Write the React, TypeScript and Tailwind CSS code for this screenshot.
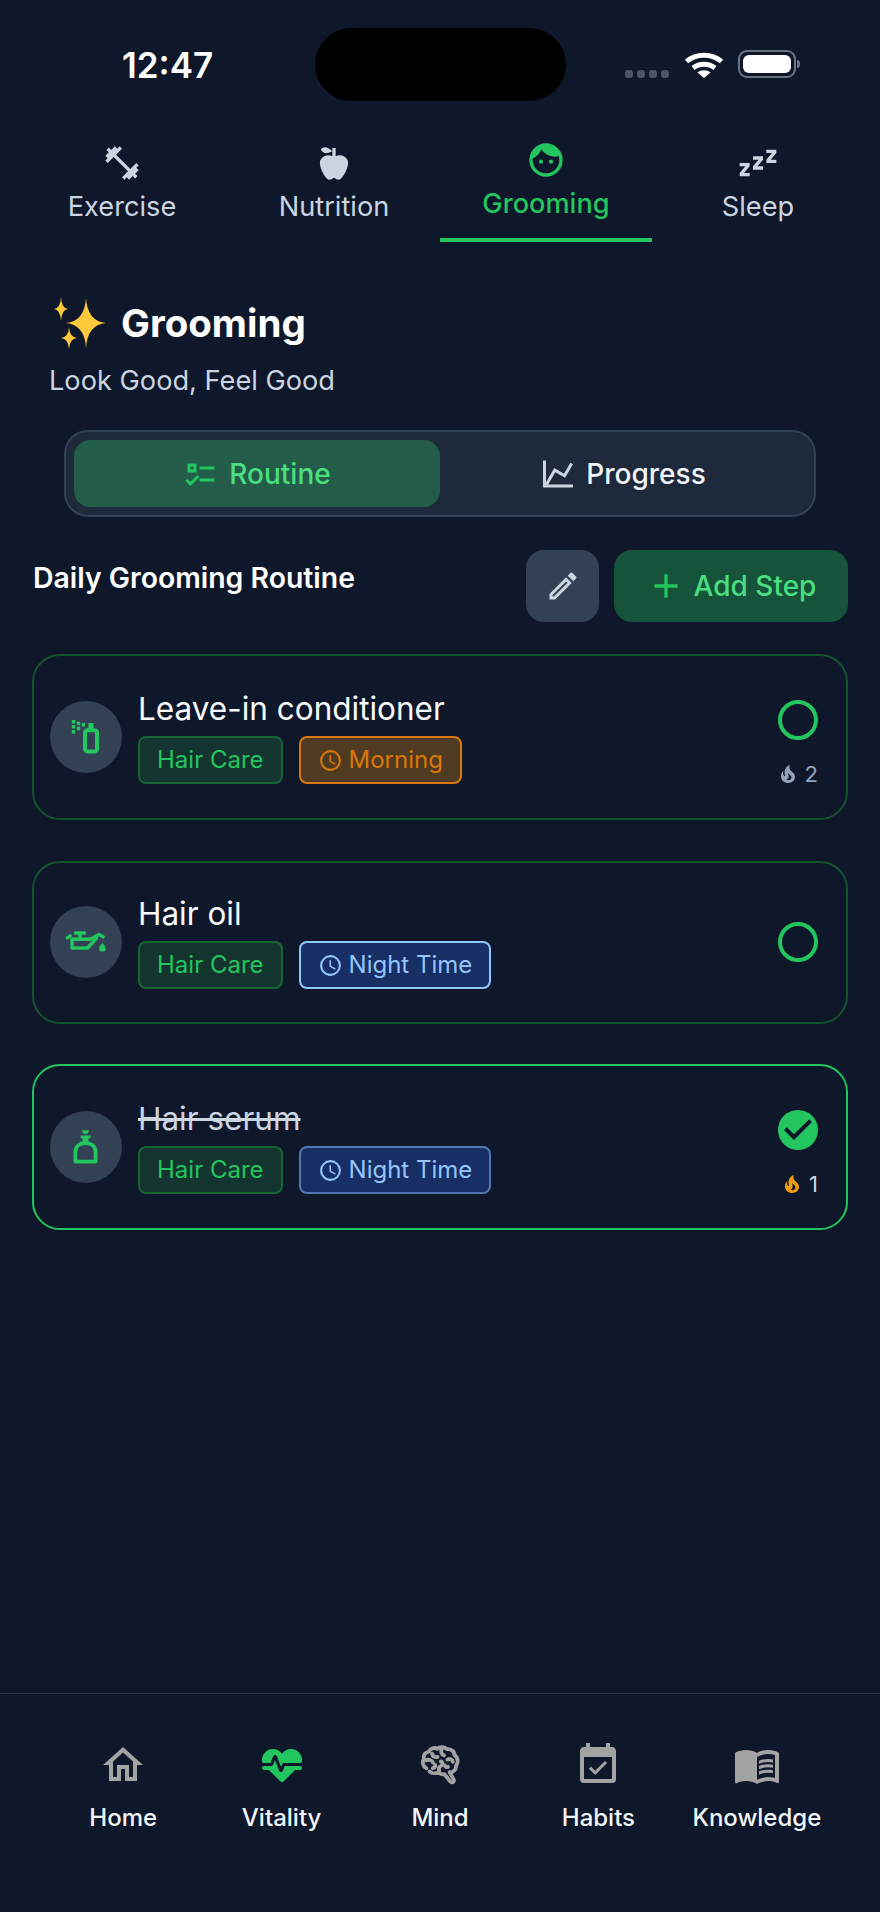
import type { ReactNode } from "react";

const mdi = {
  dumbbell:
    "M20.57,14.86L22,13.43L20.57,12L17,15.57L8.43,7L12,3.43L10.57,2L9.14,3.43L7.71,2L5.57,4.14L4.14,2.71L2.71,4.14L4.14,5.57L2,7.71L3.43,9.14L2,10.57L3.43,12L7,8.43L15.57,17L12,20.57L13.43,22L14.86,20.57L16.29,22L18.43,19.86L19.86,21.29L21.29,19.86L19.86,18.43L22,16.29L20.57,14.86Z",
  apple:
    "M20,10C22,13 17,22 15,22C13,22 13,21 12,21C11,21 11,22 9,22C7,22 2,13 4,10C6,7 9,7 11,8V5C5.38,8.07 4.11,3.78 4.11,3.78C4.11,3.78 6.77,0.19 11,5V3H13V8C15,7 18,7 20,10Z",
  face:
    "M9,11.75A1.25,1.25 0 0,0 7.75,13A1.25,1.25 0 0,0 9,14.25A1.25,1.25 0 0,0 10.25,13A1.25,1.25 0 0,0 9,11.75M15,11.75A1.25,1.25 0 0,0 13.75,13A1.25,1.25 0 0,0 15,14.25A1.25,1.25 0 0,0 16.25,13A1.25,1.25 0 0,0 15,11.75M12,2A10,10 0 0,0 2,12A10,10 0 0,0 12,22A10,10 0 0,0 22,12A10,10 0 0,0 12,2M12,20C7.59,20 4,16.41 4,12C4,11.71 4,11.42 4.05,11.14C6.41,10.09 8.28,8.16 9.26,5.77C11.07,8.33 14.05,10 17.42,10C18.2,10 18.95,9.91 19.67,9.74C19.88,10.45 20,11.21 20,12C20,16.41 16.41,20 12,20Z",
  sleep:
    "M23,12H17V10L20.39,6H17V4H23V6L19.62,10H23V12M15,16H9V14L12.39,10H9V8H15V10L11.62,14H15V16M7,20H1V18L4.39,14H1V12H7V14L3.62,18H7V20Z",
  listChecks:
    "M3,5H9V11H3V5M5,7V9H7V7H5M11,7H21V9H11V7M11,15H21V17H11V15M5,20L1.5,16.5L2.91,15.09L5,17.17L9.59,12.59L11,14L5,20Z",
  chartLine:
    "M16,11.78L20.24,4.45L21.97,5.45L16.74,14.5L10.23,10.75L5.46,19H22V21H2V3H4V17.54L9.5,8L16,11.78Z",
  pencil:
    "M14.06,9L15,9.94L5.92,19H5V18.08L14.06,9M17.66,3C17.41,3 17.15,3.1 16.96,3.29L15.13,5.12L18.88,8.87L20.71,7.04C21.1,6.65 21.1,6 20.71,5.63L18.37,3.29C18.17,3.09 17.92,3 17.66,3M14.06,6.19L3,17.25V21H6.75L17.81,9.94L14.06,6.19Z",
  plus: "M19,13H13V19H11V13H5V11H11V5H13V11H19V13Z",
  clock:
    "M12,20A8,8 0 0,0 20,12A8,8 0 0,0 12,4A8,8 0 0,0 4,12A8,8 0 0,0 12,20M12,2A10,10 0 0,1 22,12A10,10 0 0,1 12,22C6.47,22 2,17.5 2,12A10,10 0 0,1 12,2M12.5,7V12.25L17,14.92L16.25,16.15L11,13V7H12.5Z",
  fire:
    "M17.66 11.2C17.43 10.9 17.15 10.64 16.89 10.38C16.22 9.78 15.46 9.35 14.82 8.72C13.33 7.26 13 4.85 13.95 3C13 3.23 12.17 3.75 11.46 4.32C8.87 6.4 7.85 10.07 9.07 13.22C9.11 13.32 9.15 13.42 9.15 13.55C9.15 13.77 9 13.97 8.8 14.05C8.57 14.15 8.33 14.09 8.14 13.93C8.08 13.88 8.04 13.83 8 13.76C6.87 12.33 6.69 10.28 7.45 8.64C5.78 10 4.87 12.3 5 14.47C5.06 14.97 5.12 15.47 5.29 15.97C5.43 16.57 5.7 17.17 6 17.7C7.08 19.43 8.95 20.67 10.96 20.92C13.1 21.19 15.39 20.8 17.03 19.32C18.86 17.66 19.5 15 18.56 12.72L18.43 12.46C18.22 12 17.66 11.2 17.66 11.2M14.5 17.5C14.22 17.74 13.76 18 13.4 18.1C12.28 18.5 11.16 17.94 10.5 17.28C11.69 17 12.4 16.12 12.61 15.23C12.78 14.43 12.46 13.77 12.33 13C12.21 12.26 12.23 11.63 12.5 10.94C12.69 11.32 12.89 11.7 13.13 12C13.9 13 15.11 13.44 15.37 14.8C15.41 14.94 15.43 15.08 15.43 15.23C15.46 16.05 15.1 16.95 14.5 17.5H14.5Z",
  home: "M12 5.69L17 10.19V18H15V12H9V18H7V10.19L12 5.69M12 3L2 12H5V20H11V14H13V20H19V12H22",
  heart:
    "M7.5,4A5.5,5.5 0 0,0 2,9.5C2,10 2.09,10.5 2.22,11H6.3L7.57,7.63C7.87,6.83 9.05,6.75 9.43,7.63L11.5,13L12.09,11.58C12.22,11.25 12.57,11 13,11H21.78C21.91,10.5 22,10 22,9.5A5.5,5.5 0 0,0 16.5,4C14.64,4 13,4.93 12,6.34C11,4.93 9.36,4 7.5,4V4M3,12.5A1,1 0 0,0 2,13.5A1,1 0 0,0 3,14.5H5.44L11,20C12,20.9 12,20.9 13,20L18.56,14.5H21A1,1 0 0,0 22,13.5A1,1 0 0,0 21,12.5H13.4L12.47,14.8C12.07,15.81 10.92,15.67 10.55,14.83L8.5,9.5L7.54,11.83C7.39,12.21 7.05,12.5 6.6,12.5H3Z",
  calendar:
    "M19,19H5V8H19M19,3H18V1H16V3H8V1H6V3H5C3.89,3 3,3.9 3,5V19A2,2 0 0,0 5,21H19A2,2 0 0,0 21,19V5C21,3.89 20.1,3 19,3M16.53,11.06L15.47,10L10.59,14.88L8.47,12.76L7.41,13.82L10.59,17L16.53,11.06Z",
  book:
    "M21,5C19.89,4.65 18.67,4.5 17.5,4.5C15.55,4.5 13.45,4.9 12,6C10.55,4.9 8.45,4.5 6.5,4.5C4.55,4.5 2.45,4.9 1,6V20.65C1,20.9 1.25,21.15 1.5,21.15C1.6,21.15 1.65,21.1 1.75,21.1C3.1,20.45 5.05,20 6.5,20C8.45,20 10.55,20.4 12,21.5C13.35,20.65 15.8,20 17.5,20C19.15,20 20.85,20.3 22.25,21.05C22.35,21.1 22.4,21.1 22.5,21.1C22.75,21.1 23,20.85 23,20.6V6C22.4,5.55 21.75,5.25 21,5M21,18.5C19.9,18.15 18.7,18 17.5,18C15.8,18 13.35,18.65 12,19.5V8C13.35,7.15 15.8,6.5 17.5,6.5C18.7,6.5 19.9,6.65 21,7V18.5M17.5,10.5C18.38,10.5 19.23,10.59 20,10.76V9.24C19.21,9.09 18.36,9 17.5,9C15.8,9 14.26,9.29 13,9.83V11.49C14.13,10.85 15.7,10.5 17.5,10.5M13,12.49V14.15C14.13,13.51 15.7,13.16 17.5,13.16C18.38,13.16 19.23,13.25 20,13.42V11.9C19.21,11.75 18.36,11.66 17.5,11.66C15.8,11.66 14.26,11.96 13,12.49M17.5,14.33C15.8,14.33 14.26,14.62 13,15.16V16.82C14.13,16.18 15.7,15.83 17.5,15.83C18.38,15.83 19.23,15.92 20,16.09V14.57C19.21,14.41 18.36,14.33 17.5,14.33Z",
};

const Icon = ({ d, className }: { d: string; className: string }) => (
  <svg viewBox="0 0 24 24" className={className} fill="currentColor">
    <path d={d} />
  </svg>
);

const Star = ({ cx, cy, rx, ry }: { cx: number; cy: number; rx: number; ry: number }) => (
  <path
    d={`M${cx} ${cy - ry}Q${cx + rx * 0.07} ${cy - ry * 0.07} ${cx + rx} ${cy}Q${cx + rx * 0.07} ${cy + ry * 0.07} ${cx} ${cy + ry}Q${cx - rx * 0.07} ${cy + ry * 0.07} ${cx - rx} ${cy}Q${cx - rx * 0.07} ${cy - ry * 0.07} ${cx} ${cy - ry}Z`}
  />
);

const Sparkles = () => (
  <svg viewBox="0 0 60 56" className="w-[60px] h-[56px] shrink-0" fill="#fdc93a">
    <Star cx={37} cy={27} rx={20} ry={25} />
    <Star cx={12} cy={13} rx={7} ry={12} />
    <Star cx={20} cy={42} rx={8} ry={11} />
  </svg>
);

const SprayIcon = () => (
  <svg viewBox="0 0 24 24" className="w-12 h-12" fill="currentColor">
    <rect x="11.5" y="8.6" width="6" height="10.6" rx="1.2" fill="none" stroke="currentColor" strokeWidth="2" />
    <path d="M13.2 5H15.8V8H13.2Z" />
    <path d="M4.9 3.5H6.6V5.2H4.9ZM4.9 6H6.6V7.7H4.9ZM4.9 8.5H6.6V10.2H4.9ZM7.4 4.4H9.1V6.1H7.4ZM7.4 6.9H9.1V8.6H7.4ZM9.9 5H11.6V6.7H9.9Z" />
  </svg>
);

const OilIcon = () => (
  <svg viewBox="0 0 24 24" className="w-12 h-12" fill="none" stroke="currentColor" strokeWidth="1.7" strokeLinecap="round" strokeLinejoin="round">
    <path d="M2.6 9.9L4.1 8.9" />
    <path d="M6.7 7.5H11.3M9 7.5V10.6" />
    <path d="M5 10.6H14L18.5 8.2L20.6 9.4" />
    <path d="M5 10.6V15H12.8L17.3 10" />
    <path d="M20.2 12.4C20.9 13.4 21.8 14.1 21.8 15.2A1.6 1.6 0 0 1 18.6 15.2C18.6 14.1 19.5 13.4 20.2 12.4Z" fill="currentColor" stroke="none" />
  </svg>
);

const BottleIcon = () => (
  <svg viewBox="0 0 24 24" className="w-12 h-12" fill="currentColor">
    <path d="M6.7 19.3V14.5C6.7 11.5 9 10 11.7 10C14.4 10 16.8 11.5 16.8 14.5V19.3Z" fill="none" stroke="currentColor" strokeWidth="1.9" strokeLinejoin="round" />
    <path d="M10.3 6.6H13.2V10H10.3ZM9.3 6.3H14.3V7.6H9.3ZM9.8 3.6H13.6L12.7 5.4H10.7Z" />
  </svg>
);

const BrainIcon = () => (
  <svg viewBox="0 0 24 24" className="w-12 h-12" fill="none" stroke="currentColor" strokeWidth="1.9" strokeLinecap="round" strokeLinejoin="round">
    <path d="M5.2 13.6C3.4 12.8 2.9 10.4 4 9C3.5 7 4.9 5.5 6.5 5.3C7 3.7 9.2 3 10.6 3.9C11.8 2.7 14.4 2.8 15.4 4.1C17.4 3.8 19.3 5.2 19.3 7.1C21.1 8.2 21.3 11 20 12.4C20.2 14.4 18.5 15.9 16.8 15.6L18.9 19.3C19.3 20.3 18 21.2 17.2 20.3L14.2 16.6C13 16.8 11.9 16.5 11 15.7C9.6 16.3 7.7 16.2 6.8 15.2" />
    <path d="M5 9.7C6.4 9 8 9.5 8.5 10.8M8 6.4C8.4 7.6 9.5 8.2 10.8 8M12.8 4.2C12.2 5.5 12.8 6.8 14 7.2M15.7 9.3C17 8.6 18.2 9.2 18.4 10.4M12.4 10.2C13.6 10.6 13.4 12 12.3 12.6C11.4 13 11.2 14 11.7 14.8M16 13C15.2 13.2 14.6 12.8 14.4 12.2M8.4 13.6C9.2 13.4 9.8 12.8 9.6 12" />
  </svg>
);

const tabs = [
  { label: "Exercise", icon: mdi.dumbbell },
  { label: "Nutrition", icon: mdi.apple },
  { label: "Grooming", icon: mdi.face, active: true },
  { label: "Sleep", icon: mdi.sleep },
];

const navItems = [
  { label: "Home", icon: mdi.home },
  { label: "Vitality", icon: mdi.heart, active: true },
  { label: "Mind", brain: true, icon: "" },
  { label: "Habits", icon: mdi.calendar },
  { label: "Knowledge", icon: mdi.book },
];

const Chip = ({ className, icon, children }: { className: string; icon?: boolean; children: ReactNode }) => (
  <span className={`h-12 px-[17px] flex items-center gap-[6px] rounded-lg border-2 text-2xl ${className}`}>
    {icon && <Icon d={mdi.clock} className="w-[25px] h-[25px]" />}
    {children}
  </span>
);

type Step = {
  title: string;
  icon: ReactNode;
  chipClass: string;
  chipLabel: string;
  cardClass: string;
  done?: boolean;
  streak?: number;
};

const steps: Step[] = [
  {
    title: "Leave-in conditioner",
    icon: <SprayIcon />,
    chipClass: "bg-[#4f3b22] border-[#d97706] text-[#d97706]",
    chipLabel: "Morning",
    cardClass: "h-[166px] border-[#14532d]",
    streak: 2,
  },
  {
    title: "Hair oil",
    icon: <OilIcon />,
    chipClass: "bg-[#172f65] border-[#93c5fd] text-[#93c5fd]",
    chipLabel: "Night Time",
    cardClass: "h-[163px] border-[#14532d]",
  },
  {
    title: "Hair serum",
    icon: <BottleIcon />,
    chipClass: "bg-[#172f65] border-[#5577b0] text-[#93c5fd]",
    chipLabel: "Night Time",
    cardClass: "h-[166px] border-[#22c55e]",
    done: true,
    streak: 1,
  },
];

const StepCard = ({ step }: { step: Step }) => (
  <div className={`flex items-center pl-4 pr-7 rounded-[28px] border-2 ${step.cardClass}`}>
    <div className="w-[72px] h-[72px] rounded-full bg-[#334155] text-[#22c55e] flex items-center justify-center shrink-0">
      {step.icon}
    </div>
    <div className="ml-4 mb-[3px] flex-1">
      <p className={`text-[31.5px] leading-[44px] mb-[5px] ${step.done ? "text-[#cbd5e1] line-through" : "text-[#f8fafc]"}`}>
        {step.title}
      </p>
      <div className="flex gap-4">
        <Chip className="bg-[#14352f] border-[#166534] text-[#22c55e]">Hair Care</Chip>
        <Chip className={step.chipClass} icon>
          {step.chipLabel}
        </Chip>
      </div>
    </div>
    <div className={`flex flex-col items-end ${step.streak ? "self-start mt-[44px]" : ""}`}>
      {step.done ? (
        <svg viewBox="0 0 24 24" className="w-12 h-12 -m-1">
          <circle cx="12" cy="12" r="10" fill="#22c55e" />
          <path d="M10 17L5 12L6.41 10.59L10 14.17L17.59 6.58L19 8L10 17Z" fill="#0f172a" />
        </svg>
      ) : (
        <div className="w-10 h-10 rounded-full border-4 border-[#22c55e]" />
      )}
      {step.streak && (
        <div className="mt-5 flex items-center gap-[5px]">
          <Icon d={mdi.fire} className={`w-6 h-6 ${step.done ? "text-[#f59e0b]" : "text-[#94a3b8]"}`} />
          <span className={`text-[22px] leading-[28px] ${step.done ? "text-[#cbd5e1]" : "text-[#94a3b8]"}`}>{step.streak}</span>
        </div>
      )}
    </div>
  </div>
);

const App = () => {
  return (
    <div className="w-[880px] h-[1912px] bg-[#0f172a] flex flex-col overflow-hidden [font-family:Inter,sans-serif]">
      {/* Status bar */}
      <div className="flex items-start pt-7 h-[143px]">
        <div className="w-[315px] pl-[122px] pt-[17px] text-[35px] leading-[40px] font-semibold text-white">12:47</div>
        <div className="w-[251px] h-[73px] rounded-full bg-black" />
        <div className="ml-[59px] flex items-start">
          <div className="flex gap-[4px] mt-[42px]">
            <span className="w-2 h-2 rounded-[3px] bg-[#4b5563]" />
            <span className="w-2 h-2 rounded-[3px] bg-[#4b5563]" />
            <span className="w-2 h-2 rounded-[3px] bg-[#4b5563]" />
            <span className="w-2 h-2 rounded-[3px] bg-[#4b5563]" />
          </div>
          <svg viewBox="0 0 40 28" className="w-10 h-7 ml-[15px] mt-[23px]" fill="none" stroke="white" strokeWidth="5">
            <path d="M2.5 10.5C12 2 28 2 37.5 10.5" />
            <path d="M9 17C15.5 12 24.5 12 31 17" />
            <path d="M20 27L13.5 21.5C17 18.5 23 18.5 26.5 21.5Z" fill="white" stroke="none" />
          </svg>
          <div className="ml-[14px] mt-[22px] flex items-center">
            <div className="w-[58px] h-[28px] rounded-[9px] border-2 border-[#6b7280] p-[3px]">
              <div className="w-full h-full rounded-[6px] bg-white" />
            </div>
            <div className="w-[3px] h-2 rounded-r-sm bg-[#6b7280] ml-[1px]" />
          </div>
        </div>
      </div>

      {/* Category tabs */}
      <div className="flex px-4">
        {tabs.map((tab) => (
          <div key={tab.label} className={`w-[212px] h-[99px] flex flex-col items-center ${tab.active ? "border-b-4 border-[#22c55e]" : ""}`}>
            <div className={`flex flex-col items-center ${tab.active ? "-translate-y-[3px] text-[#22c55e] font-medium" : "text-[#cbd5e1]"}`}>
              <Icon d={tab.icon} className="w-10 h-10" />
              <span className="text-[27.2px] leading-[40px] mt-1">{tab.label}</span>
            </div>
          </div>
        ))}
      </div>

      {/* Heading */}
      <div className="pl-[49px] mt-[54px]">
        <div className="flex items-center gap-[12px] h-14">
          <Sparkles />
          <h1 className="text-[38.5px] font-bold text-white">Grooming</h1>
        </div>
        <p className="text-[27.2px] leading-[36px] text-[#cbd5e1] mt-[11px]">Look Good, Feel Good</p>
      </div>

      {/* Routine / Progress switch */}
      <div className="mx-16 mt-[31px] h-[87px] p-2 rounded-[24px] border-2 border-[#334155] bg-[#1e293b] flex">
        <div className="flex-1 rounded-2xl bg-[#235c48] flex items-center justify-center gap-[10px] text-[#4ade80]">
          <Icon d={mdi.listChecks} className="w-9 h-9 text-[#22c55e]" />
          <span className="text-[28px] font-medium">Routine</span>
        </div>
        <div className="flex-1 flex items-center justify-center gap-[10px] text-[#f1f5f9]">
          <Icon d={mdi.chartLine} className="w-9 h-9 text-[#cbd5e1]" />
          <span className="text-[28px] font-medium">Progress</span>
        </div>
      </div>

      {/* Section header */}
      <div className="mx-8 mt-[33px] flex items-start">
        <h2 className="text-[28.4px] leading-[40px] mt-2 ml-px font-semibold text-white flex-1">Daily Grooming Routine</h2>
        <button className="w-[73px] h-[72px] rounded-[18px] bg-[#334155] flex items-center justify-center text-[#cbd5e1]">
          <Icon d={mdi.pencil} className="w-9 h-9" />
        </button>
        <button className="ml-[15px] w-[234px] h-[72px] rounded-[18px] bg-[#16533b] flex items-center justify-center gap-2 text-[#4ade80]">
          <Icon d={mdi.plus} className="w-10 h-10 text-[#22c55e]" />
          <span className="text-[28px] font-medium">Add Step</span>
        </button>
      </div>

      {/* Steps */}
      <div className="mx-8 mt-8 flex flex-col gap-[40.5px]">
        {steps.map((step) => (
          <StepCard key={step.title} step={step} />
        ))}
      </div>

      {/* Bottom nav */}
      <div className="mt-auto h-[219px] border-t border-[#293548] px-[44px] pt-[47px] flex">
        {navItems.map((item) => (
          <div key={item.label} className="flex-1 flex flex-col items-center">
            <div className={item.active ? "text-[#22c55e]" : "text-[#a3a3a3]"}>
              {item.brain ? <BrainIcon /> : <Icon d={item.icon} className="w-12 h-12" />}
            </div>
            <span className="text-[24px] leading-[36px] mt-[11px] font-medium text-[#f1f5f9] whitespace-nowrap">{item.label}</span>
          </div>
        ))}
      </div>
    </div>
  );
};

export default App;
